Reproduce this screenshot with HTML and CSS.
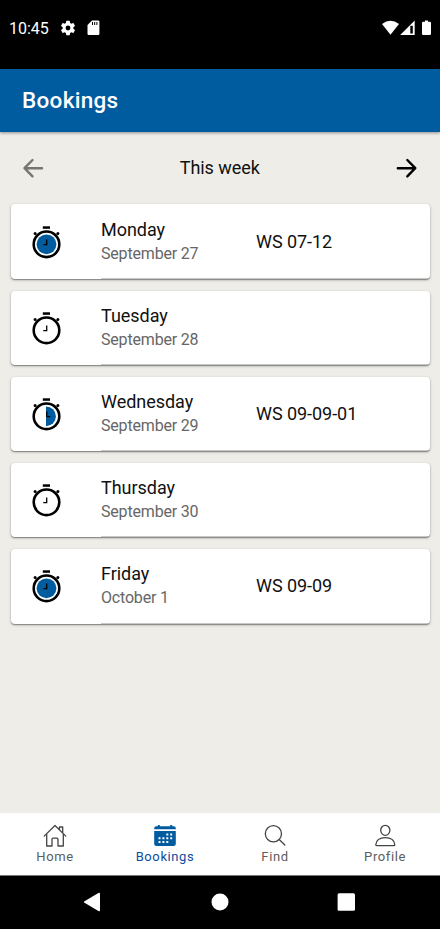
FILE: index.html
```html
<!DOCTYPE html>
<html lang="en">
<head>
<meta charset="utf-8">
<title>Bookings</title>
<link rel="stylesheet" href="styles.css">
</head>
<body>
<svg width="0" height="0" class="defs" aria-hidden="true">
  <symbol id="watch" viewBox="0 0 32 36">
    <rect x="12.300" y="2.300" width="7.200" height="2.500"/>
    <circle cx="4.600" cy="9.600" r="1.500"/><circle cx="27.400" cy="9.600" r="1.500"/>
    <circle cx="16" cy="20.300" r="12.800" fill="none" stroke="#000" stroke-width="2.600"/>
  </symbol>
</svg>
<div class="phone">
  <div class="status">
    <span class="time">10:45</span>
    <svg class="gear" width="18" height="18" viewBox="0 0 24 24" fill="#fff"><path d="M19.140 12.940c.04-.3.06-.61.06-.94s-.02-.64-.07-.94l2.030-1.580a.5.5 0 0 0 .12-.61l-1.920-3.320a.49.49 0 0 0-.59-.22l-2.390.96a7 7 0 0 0-1.620-.94l-.36-2.540a.48.48 0 0 0-.48-.41h-3.840a.47.47 0 0 0-.47.41l-.36 2.540c-.59.24-1.130.57-1.620.94l-2.390-.96a.48.48 0 0 0-.59.22L2.740 8.870a.47.47 0 0 0 .12.61l2.030 1.580a6 6 0 0 0 0 1.880l-2.030 1.580a.5.5 0 0 0-.12.61l1.920 3.320c.12.22.37.29.59.22l2.390-.96c.5.38 1.030.7 1.620.94l.36 2.540c.05.24.24.41.48.41h3.840c.24 0 .44-.17.47-.41l.36-2.540a7 7 0 0 0 1.620-.94l2.390.96c.22.08.47 0 .59-.22l1.920-3.320a.47.47 0 0 0-.12-.61zM12 15.200a3.200 3.200 0 1 1 0-6.400 3.200 3.200 0 0 1 0 6.400z"/></svg>
    <svg class="sd" width="13" height="16" viewBox="0 0 13 16"><path d="M5 .6h6.200q1.200 0 1.200 1.200v12q0 1.200-1.200 1.200H1.700Q.5 15 .5 13.800V5z" fill="#fff"/><path d="M5.500 2v3M7.700 2v3M9.900 2v3" stroke="#000" stroke-width="1"/></svg>
    <svg class="signals" width="52" height="18" viewBox="0 0 52 18" fill="#fff"><path d="M1 4Q9.500-2.500 18 4L9.500 14.800z"/><path d="M19.200 15L33.700.6V15z"/><path d="M29.300 5.800h2.500v7.700h-2.500z" fill="#000"/><path d="M44 .5h3v1.200h1.700q1.300 0 1.300 1.300v10.700q0 1.300-1.300 1.300h-6.400q-1.300 0-1.300-1.300V3q0-1.300 1.300-1.300H44z"/></svg>
  </div>
  <header><h1>Bookings</h1></header>
  <main>
    <div class="week">
      <svg width="22" height="22" viewBox="0 0 22 22" fill="none" stroke="#77756f" stroke-width="2.400" stroke-linecap="round" stroke-linejoin="round"><path d="M20 11.200H2.600M10.500 3L2.500 11.200l8 8.200"/></svg>
      <span>This week</span>
      <svg width="22" height="22" viewBox="0 0 22 22" fill="none" stroke="#000" stroke-width="2.400" stroke-linecap="round" stroke-linejoin="round"><path d="M2.800 11.200h17.400M12.300 3l8 8.200-8 8.200"/></svg>
    </div>
    <section class="days">
      <article class="card">
        <svg class="watch" viewBox="-.5 0 32 36"><use href="#watch" width="32" height="36"/><circle cx="16" cy="20.300" r="9.900" fill="#005b9f"/><path class="hands" d="M16.200 15.500v5.200h-3.400"/></svg>
        <div class="day"><h2>Monday</h2><p>September 27</p></div><div class="place">WS 07-12</div>
      </article>
      <article class="card">
        <svg class="watch" viewBox="-.5 0 32 36"><use href="#watch" width="32" height="36"/><path class="hands" d="M16.200 15.500v5.200h-3.400"/></svg>
        <div class="day"><h2>Tuesday</h2><p>September 28</p></div><div class="place"></div>
      </article>
      <article class="card">
        <svg class="watch" viewBox="-.5 0 32 36"><use href="#watch" width="32" height="36"/><path d="M15.500 10.400a9.900 9.900 0 0 1 0 19.800z" fill="#005b9f"/><path class="hands" d="M16.200 15.500v5.200h3.600"/></svg>
        <div class="day"><h2>Wednesday</h2><p>September 29</p></div><div class="place">WS 09-09-01</div>
      </article>
      <article class="card">
        <svg class="watch" viewBox="-.5 0 32 36"><use href="#watch" width="32" height="36"/><path class="hands" d="M16.200 15.500v5.200h-3.400"/></svg>
        <div class="day"><h2>Thursday</h2><p>September 30</p></div><div class="place"></div>
      </article>
      <article class="card">
        <svg class="watch" viewBox="-.5 0 32 36"><use href="#watch" width="32" height="36"/><circle cx="16" cy="20.300" r="9.900" fill="#005b9f"/><path class="hands" d="M16.200 15.500v5.200h-3.400"/></svg>
        <div class="day"><h2>Friday</h2><p>October 1</p></div><div class="place">WS 09-09</div>
      </article>
    </section>
  </main>
  <nav class="tabs">
    <a><svg width="24" height="24" viewBox="0 .5 24 24" fill="none" stroke="#444" stroke-width="1.300" stroke-linecap="round" stroke-linejoin="round"><path d="M1.200 12.600L12 2l10.800 10.600M16.500 6V3.500h3.200v6M3.700 10.800v11.700h5.300v-6.800q0-1 1-1h4q1 0 1 1v6.800h5.300V10.800"/></svg><span>Home</span></a>
    <a class="active"><svg width="24" height="24" viewBox="0 .7 24 24" fill="#005b9f"><path d="M1.200 6V5q0-2 2-2h1.600V1.700h2V3h10.400V1.700h2V3h1.600q2 0 2 2v1z"/><path d="M1.200 7.700h21.600v12.600q0 2.500-2.500 2.500H3.700q-2.500 0-2.500-2.500z"/><path d="M13.300 10.300h2v2h-2zM17.200 10.300h2v2h-2zM5.500 14h2v2h-2zM9.400 14h2v2h-2zM13.300 14h2v2h-2zM17.200 14h2v2h-2zM5.500 17.700h2v2h-2zM9.400 17.700h2v2h-2zM13.300 17.700h2v2h-2z" fill="#fff"/></svg><span>Bookings</span></a>
    <a><svg width="24" height="24" viewBox="0 .5 24 24" fill="none" stroke="#444" stroke-width="1.300" stroke-linecap="round"><circle cx="10.400" cy="10.200" r="8.100"/><path d="M16.200 16l5.600 5.500"/></svg><span>Find</span></a>
    <a><svg width="24" height="24" viewBox="0 .3 24 24" fill="none" stroke="#444" stroke-width="1.300" stroke-linejoin="round"><ellipse cx="12.300" cy="6.600" rx="4.600" ry="5"/><path d="M3.800 22h17q1 0 1-1c-.5-4.400-4.200-7-9.500-7s-9 2.600-9.500 7q0 1 1 1z"/></svg><span>Profile</span></a>
  </nav>
  <div class="system">
    <svg width="18" height="20" viewBox="0 0 18 20" fill="#fff"><path d="M1.500 10.800Q.2 10 1.500 9.200L15.400.9Q17 .1 17 1.800v16.400q0 1.700-1.600.9z"/></svg>
    <svg width="18" height="18" viewBox="0 0 18 18" fill="#fff"><circle cx="9" cy="9" r="8.500"/></svg>
    <svg width="18" height="18" viewBox="0 0 18 18" fill="#fff"><rect x=".6" y=".3" width="17.400" height="17.400" rx="1.500"/></svg>
  </div>
</div>
</body>
</html>
```
FILE: styles.css
```css
* { box-sizing: border-box; }
body { margin: 0; font-family: Roboto, "Liberation Sans", sans-serif; color: #111; }
h1, h2, p { margin: 0; font-weight: 400; }
svg { display: block; flex: none; }
.defs { display: none; }
.phone { width: 440px; height: 929px; display: flex; flex-direction: column; background: #eeede8; overflow: hidden; }
.status { height: 69px; flex: none; display: flex; align-items: flex-start; padding: 18px 7px 0 9px; background: #000; color: #fff; }
.time { font-size: 16px; line-height: 21px; width: 50px; letter-spacing: -.05px; }
.gear { margin: 1px 0 0; }
.sd { margin: 2px 0 0 10px; }
.signals { margin: 2px 0 0 auto; }
header { height: 63px; flex: none; display: flex; align-items: center; padding: 0 0 1px 22px; background: #005b9f; box-shadow: 0 1px 3px rgba(0,0,0,.4); }
h1 { font-size: 22.500px; line-height: 28px; font-weight: 500; color: #fff; letter-spacing: .3px; }
main { flex: 1; padding: 0 10.500px 0 11px; }
.week { height: 72.400px; display: flex; align-items: center; justify-content: space-between; padding: 0 12px 0 11px; font-size: 18px; }
.week span { padding-bottom: 1px; letter-spacing: -.05px; }
.days { display: flex; flex-direction: column; gap: 11.700px; }
.card { height: 74.500px; display: flex; align-items: center; background: linear-gradient(#c8c8c8, #c8c8c8) 90px 100% / 100% 1px no-repeat #fff; border-radius: 4px; padding-left: 19px; box-shadow: 0 1px 1px rgba(0,0,0,.3), 0 1px 3px rgba(0,0,0,.28); }
.watch { width: 32px; height: 36px; margin-right: 39px; }
.hands { fill: none; stroke: #000; stroke-width: 1.300; }
.day { width: 155px; }
.day h2 { font-size: 18px; line-height: 24px; letter-spacing: -.03px; }
.day p { font-size: 16px; line-height: 24px; color: #666; letter-spacing: -.18px; }
.place { font-size: 18px; line-height: 24px; letter-spacing: -.05px; }
.tabs { height: 63px; flex: none; display: grid; grid-template-columns: repeat(4, 1fr); background: #fff; border-bottom: 1px solid #777; }
.tabs a { display: flex; flex-direction: column; align-items: center; padding-top: 11px; color: #5c5c5c; font-size: 13px; line-height: 18px; letter-spacing: .6px; }
.tabs .active { color: #0b4ea2; }
.system { height: 53px; flex: none; display: flex; align-items: center; justify-content: center; gap: 109px; padding: 0 2px 1px 0; background: #000; }
.system svg:nth-child(2) { margin: 0 -.5px 0 .5px; }
```
